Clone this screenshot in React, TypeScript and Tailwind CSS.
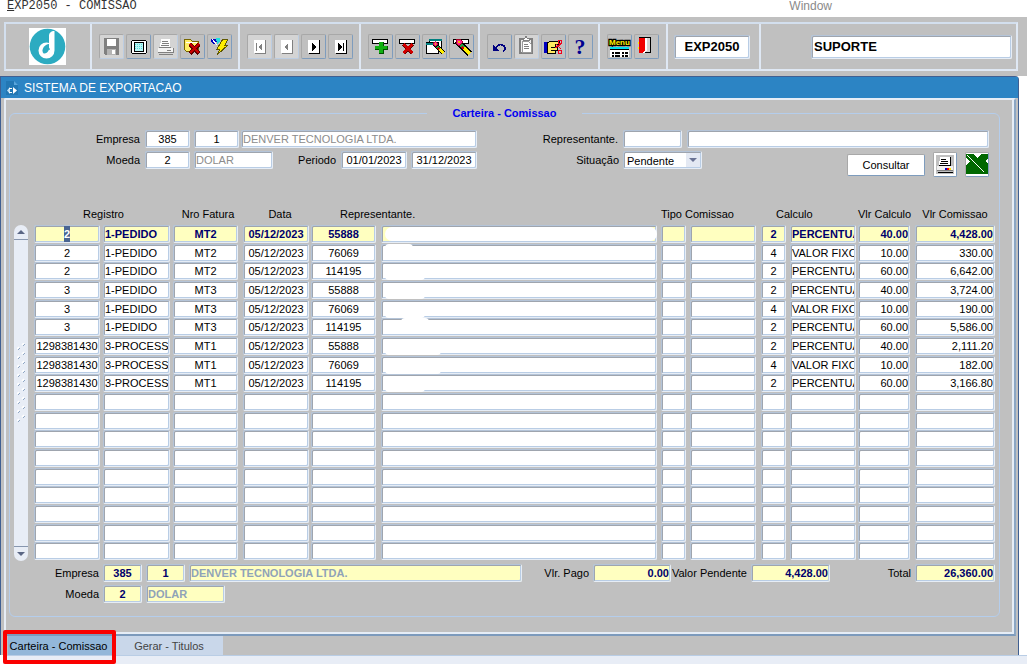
import { useEffect, useRef } from "react";
import type { InputHTMLAttributes, ReactNode } from "react";
import clsx from "clsx";

interface FieldProps extends InputHTMLAttributes<HTMLInputElement> {
  tone?: "white" | "yellow";
}

const bevel =
  "border border-t-[#b4c4d8] border-l-[#b4c4d8] border-r-[#e6edf6] border-b-[#e6edf6] rounded-xs shadow-[inset_1px_1px_0_#9fa5ae,inset_-1px_-1px_0_#b9cde5]";

const raised =
  "border border-t-[#a8a8a8] border-l-[#a8a8a8] border-r-[#7e9cbd] border-b-[#7e9cbd] rounded-xs";

function Field({ tone = "white", className, ...props }: FieldProps) {
  return (
    <input
      readOnly
      className={clsx(
        "block h-[18px] min-w-0 px-px outline-none",
        bevel,
        tone === "yellow" ? "bg-[#ffffc0] font-bold" : "bg-white",
        className
      )}
      {...props}
    />
  );
}

interface ToolButtonProps {
  label: string;
  disabled?: boolean;
  children: ReactNode;
}

function ToolButton({ label, disabled, children }: ToolButtonProps) {
  return (
    <button
      aria-label={label}
      disabled={disabled}
      className={clsx(
        "h-[25px] w-[25px] flex-none border rounded-xs border-t-[#a8a8a8] border-l-[#a8a8a8]",
        disabled
          ? "border-r-[#bccde2] border-b-[#bccde2] bg-[#d4d4d4]"
          : "border-r-[#7e9cbd] border-b-[#7e9cbd] bg-[#c0c0c0]"
      )}
    >
      <svg viewBox="0 0 23 23" className="block h-[23px] w-[23px]" shapeRendering="crispEdges">
        {children}
      </svg>
    </button>
  );
}

function NavGlyph({ color, children }: { color: string; children: ReactNode }) {
  return (
    <>
      <path d="M7 5h11v14H7z" fill={color} />
      <path d="M6 5h11v13H6z" fill="#fff" />
      <g fill={color}>{children}</g>
    </>
  );
}

function RecordBar() {
  return (
    <>
      <path d="M3 4h16v5H3z" fill="#000" />
      <path d="M4 5h14v3H4z" fill="#fff" />
    </>
  );
}

function RedCross() {
  return (
    <>
      <path d="M7.500 9.500l9 9M16.500 9.500l-9 9" stroke="#600000" strokeWidth="4" />
      <path d="M7.500 9l9 9M16.500 9l-9 9" stroke="#d00000" strokeWidth="2.500" />
    </>
  );
}

function Torch() {
  return (
    <>
      <path d="M7 6l13 13" stroke="#000" strokeWidth="6" />
      <path d="M13 12l7 7" stroke="#ffee00" strokeWidth="4" />
      <path d="M11 10l3 3" stroke="#20a040" strokeWidth="4" />
      <path d="M12 12l2 2" stroke="#d00000" strokeWidth="2" />
      <path d="M6 5l2-1h2l2 2v2l-2 2H8L6 8z" fill="#ff2090" stroke="#a00020" />
      <path d="M8 6h2v2H8z" fill="#ffb000" />
    </>
  );
}

function Toolbar() {
  const group = "flex flex-none items-center gap-0.5 border-r-2 border-[#dfe8f4] pl-[7px]";
  return (
    <div className="bg-[#c0c0c0] pt-[5px] pr-[9px] pb-[5px] pl-1">
      <div className="flex h-[49px] border-2 border-t-[#d3dfee] border-r-[#dfe8f4] border-b-[#dfe8f4] border-l-[#d3dfee]">
        <div className="flex w-[86px] flex-none items-center justify-center border-r-2 border-[#dfe8f4] pr-0.5">
          <svg viewBox="0 0 37 37" className="h-[37px] w-[37px] bg-white" role="img" aria-label="Denver">
            <circle cx="18.500" cy="18.500" r="17.800" fill="#2cabc1" />
            <path d="M20 8c0-3 2-5 5.500-5v19.500a8 8 0 1 1-8-8c1.200 0 2 .2 2.500.5z" fill="#fff" />
            <circle cx="17.300" cy="22.500" r="3.800" fill="#2cabc1" />
            <path d="M14 20.500c2-3.500 4-4.500 6-4.500v4z" fill="#2cabc1" />
            <path d="M15 25.500c2.500 0 4-1.500 5-4l2 1c-1 3-3 4.500-6 4.500z" fill="#fff" />
          </svg>
        </div>

        <div className={clsx(group, "w-[148px]")}>
          <ToolButton label="Salvar" disabled>
            <path d="M4 3h15v17H5l-1-1z" fill="#808080" />
            <path d="M7 4h9v7H7z" fill="#fff" />
            <path d="M7 14h9v6H7z" fill="#b4b4b4" />
            <path d="M12 15h3v4h-3z" fill="#fff" />
          </ToolButton>
          <ToolButton label="Tela">
            <path d="M5 5h14v1h1v12h-1v1H5v-1H4V6h1z" fill="#000" />
            <path d="M5 6h14v12H5z" fill="#fff" />
            <path d="M7 7h10v10H7z" fill="#000" />
            <path d="M8 8h8v8H8z" fill="#b8f6f6" />
            <path d="M8 9.500h8M8 11.500h8M8 13.500h8" stroke="#58d8d8" strokeDasharray="1 1" />
          </ToolButton>
          <ToolButton label="Imprimir" disabled>
            <path d="M7 4h9v8H6z" fill="#fff" />
            <path d="M8 6.500h6M8 8.500h7M7 10.500h8M5 12.500h12" stroke="#808080" />
            <path d="M4 13h15v4H4z" fill="#f4f4f4" />
            <path d="M4 17.500h15M5 19.500h14M13 15.500h4M19.500 13v5" stroke="#808080" />
          </ToolButton>
          <ToolButton label="Limpar">
            <path d="M3 5l2-1h4l2 2h6v10H5l-2-2z" fill="#ffee66" stroke="#776600" />
            <path d="M5 7.500h11" stroke="#fff" />
            <path d="M9 9.500l9 9M18 9.500l-9 9" stroke="#600000" strokeWidth="4" />
            <path d="M9 9l9 9M18 9l-9 9" stroke="#c80000" strokeWidth="2" />
          </ToolButton>
          <ToolButton label="Executar">
            <path d="M3 4h6v2L6 10 3 7z" fill="#0000c0" />
            <path d="M8 3h4v3l-3 3z" fill="#20e0e0" />
            <path d="M4 4l5 6" stroke="#fff" />
            <path d="M15 4h5l-3 6h3L9 20l3-6H9z" fill="#ffee00" stroke="#605800" />
          </ToolButton>
        </div>

        <div className={clsx(group, "w-[121px]")}>
          <ToolButton label="Primeiro" disabled>
            <NavGlyph color="#808080">
              <path d="M8 8h1v8H8zM14 8v8l-4-4z" />
            </NavGlyph>
          </ToolButton>
          <ToolButton label="Anterior" disabled>
            <NavGlyph color="#808080">
              <path d="M13 8v8l-4-4z" />
            </NavGlyph>
          </ToolButton>
          <ToolButton label="Proximo">
            <NavGlyph color="#000">
              <path d="M10 8v8l4-4z" />
            </NavGlyph>
          </ToolButton>
          <ToolButton label="Ultimo">
            <NavGlyph color="#000">
              <path d="M9 8v8l4-4zM14 8h1v8h-1z" />
            </NavGlyph>
          </ToolButton>
        </div>

        <div className={clsx(group, "w-[119px]")}>
          <ToolButton label="Inserir">
            <RecordBar />
            <path d="M10 7h5v4h4v4h-4v4h-5v-4H6v-4h4z" fill="#005000" />
            <path d="M10 7h4v4h4v3h-4v4h-4v-4H6v-3h4z" fill="#10b010" />
          </ToolButton>
          <ToolButton label="Excluir">
            <RecordBar />
            <RedCross />
          </ToolButton>
          <ToolButton label="Consulta">
            <path d="M6 4h13v13H6z" fill="#000" />
            <path d="M7 5h11v11H7z" fill="#fff" />
            <path d="M3 7h13v12H3z" fill="#000" />
            <path d="M4 8h11v10H4z" fill="#fff" />
            <path d="M3 8h12v2H3zM6 4h13v2H6z" fill="#008080" />
            <g transform="translate(6 4) scale(.72)">
              <Torch />
            </g>
          </ToolButton>
          <ToolButton label="Filtrar">
            <RecordBar />
            <Torch />
          </ToolButton>
        </div>

        <div className={clsx(group, "w-[120px]")}>
          <ToolButton label="Desfazer">
            <path d="M7 14c2-5 9-6 10-1 0 2-1 3-2 3" fill="none" stroke="#000080" strokeWidth="1.500" />
            <path d="M5 10v6h6z" fill="#000080" />
          </ToolButton>
          <ToolButton label="Colar" disabled>
            <path d="M5 4h12v14H5z" fill="#eee" stroke="#808080" strokeWidth="1.500" />
            <path d="M7 6h6l3 3v8H7z" fill="#fff" stroke="#999" />
            <path d="M8 3h2l1-2 1 2h2v2H8z" fill="#fff" stroke="#808080" />
            <path d="M9 9.500h4M9 11.500h5M9 13.500h5" stroke="#808080" />
          </ToolButton>
          <ToolButton label="Lista">
            <path d="M2 7h3v11H2z" fill="#0000c0" />
            <path d="M5 8l4-2h8v3h-4v3h2v3h-2v3H5z" fill="#ffe860" stroke="#000" />
            <path d="M9 12.500h5M9 15.500h4" stroke="#000" />
            <path d="M16 5h3v3h-3zM16 15h3v3h-3zM13 13l6-4M14 9l5 5" fill="none" stroke="#f00020" />
          </ToolButton>
          <ToolButton label="Ajuda">
            <text
              x="11"
              y="19"
              textAnchor="middle"
              fill="#000090"
              className="font-['Liberation_Serif',serif] text-[22px] font-bold"
            >
              ?
            </text>
          </ToolButton>
        </div>

        <div className={clsx(group, "w-[68px]")}>
          <ToolButton label="Menu">
            <text
              x="1"
              y="10"
              fill="#fff200"
              stroke="#000"
              strokeWidth="2.500"
              paintOrder="stroke"
              className="font-['Liberation_Sans',Arial,sans-serif] text-[8px] font-bold"
            >
              Menu
            </text>
            <path d="M2 12h19v10H2z" fill="#fff" />
            <path d="M2 12h19v2H2z" fill="#00e0f0" />
            <path d="M2 14.500h19" stroke="#000" />
            <path d="M4 17.500h16M4 20.500h16" stroke="#000" strokeWidth="2" strokeDasharray="2 1 5 2" />
          </ToolButton>
          <ToolButton label="Sair">
            <path d="M4 2h12v16H4z" fill="#000" />
            <path d="M5 3h10v14H5z" fill="#d4d4d4" />
            <path d="M9 3h3v12l-3 3H7z" fill="#fff" />
            <path d="M4 3h6v12l-3 3H4z" fill="#f00000" />
            <path d="M3 7h1v2H3zM3 12h1v2H3z" fill="#ffee00" />
          </ToolButton>
        </div>

        <div className="flex w-[93px] flex-none items-center border-r-2 border-[#dfe8f4] pl-[6px]">
          <input
            readOnly
            aria-label="Programa"
            defaultValue="EXP2050"
            className={clsx("h-6 w-[76px] bg-white text-center text-[13px] font-bold outline-none", bevel)}
          />
        </div>
        <div className="flex flex-1 items-center pr-1 pl-[50px]">
          <input
            readOnly
            aria-label="Usuario"
            defaultValue="SUPORTE"
            className={clsx("h-6 w-full bg-white pl-0.5 text-[13px] font-bold outline-none", bevel)}
          />
        </div>
      </div>
    </div>
  );
}

const rows = [
  ["2", "1-PEDIDO", "MT2", "05/12/2023", "55888", "", "", "", "2", "PERCENTUAL", "40.00", "4,428.00"],
  ["2", "1-PEDIDO", "MT2", "05/12/2023", "76069", "", "", "", "4", "VALOR FIXO", "10.00", "330.00"],
  ["2", "1-PEDIDO", "MT2", "05/12/2023", "114195", "", "", "", "2", "PERCENTUAL", "60.00", "6,642.00"],
  ["3", "1-PEDIDO", "MT3", "05/12/2023", "55888", "", "", "", "2", "PERCENTUAL", "40.00", "3,724.00"],
  ["3", "1-PEDIDO", "MT3", "05/12/2023", "76069", "", "", "", "4", "VALOR FIXO", "10.00", "190.00"],
  ["3", "1-PEDIDO", "MT3", "05/12/2023", "114195", "", "", "", "2", "PERCENTUAL", "60.00", "5,586.00"],
  ["1298381430", "3-PROCESSO", "MT1", "05/12/2023", "55888", "", "", "", "2", "PERCENTUAL", "40.00", "2,111.20"],
  ["1298381430", "3-PROCESSO", "MT1", "05/12/2023", "76069", "", "", "", "4", "VALOR FIXO", "10.00", "182.00"],
  ["1298381430", "3-PROCESSO", "MT1", "05/12/2023", "114195", "", "", "", "2", "PERCENTUAL", "60.00", "3,166.80"],
];

const TOTAL_ROWS = 18;

const columns = [
  { name: "Registro", col: "w-[69px]", cell: "pr-[3px]", align: "text-center" },
  { name: "Tipo Registro", col: "w-[70px]", cell: "pr-[3px]", align: "text-left" },
  { name: "Nro Fatura", col: "w-[70px]", cell: "pr-[5px]", align: "text-center" },
  { name: "Data", col: "w-[68px]", cell: "pr-0.5", align: "text-center" },
  { name: "Representante", col: "w-[70px]", cell: "pr-[5px]", align: "text-center" },
  { name: "Nome", col: "", cell: "pr-1", align: "text-left" },
  { name: "Tipo", col: "w-[29px]", cell: "pr-1", align: "text-center" },
  { name: "Tipo Comissao", col: "w-[71px]", cell: "pr-[5px]", align: "text-left" },
  { name: "Calculo", col: "w-[29px]", cell: "pr-1", align: "text-center" },
  { name: "Descricao Calculo", col: "w-[68px]", cell: "pr-0.5", align: "text-left" },
  { name: "Vlr Calculo", col: "w-[57px]", cell: "pr-[5px]", align: "text-right" },
  { name: "Vlr Comissao", col: "w-[80px]", cell: "", align: "text-right" },
];

// white-out over the names, one entry per filled row
const masks = [
  "inset-y-0.5 left-1 right-0 rounded-lg",
  "top-0 left-1 h-2 w-7 rounded-full",
  "bottom-0 left-1 h-2 w-10 rounded-full",
  "bottom-0 left-1 h-2 w-10 rounded-full",
  "bottom-0 left-1 h-2 w-10 rounded-full",
  "top-0 left-5 h-2 w-7 rounded-full",
  "bottom-0 left-1 h-2 w-14 rounded-full",
  "bottom-0 left-1 h-2 w-14 rounded-full",
  "bottom-0 left-1 h-2 w-10 rounded-full",
];

function ScrollBar() {
  return (
    <div className="flex h-[336px] w-[14px] flex-none flex-col items-center justify-between rounded-full bg-[#e8edf6]">
      <div className="flex h-[15px] w-full items-center justify-center border-b border-[#8796ae]">
        <svg viewBox="0 0 8 4" className="h-1 w-2">
          <path d="M4 0l4 4H0z" fill="#5a6684" />
        </svg>
      </div>
      <svg viewBox="0 0 8 84" className="mb-4 h-[84px] w-2" aria-hidden="true">
        {Array.from({ length: 9 }, (_, i) => (
          <g key={i}>
            <path d={`M0 ${i * 9 + 6}l2-2M5 ${i * 9 + 2}l2-2`} stroke="#fff" strokeWidth="1.5" />
            <path d={`M1 ${i * 9 + 7}l2-2M6 ${i * 9 + 3}l2-2`} stroke="#8fa6c4" />
          </g>
        ))}
      </svg>
      <div className="flex h-[15px] w-full items-center justify-center border-t border-[#8796ae]">
        <svg viewBox="0 0 8 4" className="h-1 w-2">
          <path d="M0 0h8L4 4z" fill="#5a6684" />
        </svg>
      </div>
    </div>
  );
}

function CommissionTable() {
  const body = useRef<HTMLTableSectionElement>(null);

  useEffect(() => {
    const input = body.current?.querySelector("input");
    input?.focus();
    input?.select();
  }, []);

  return (
    <table className="w-full flex-1 table-fixed border-collapse">
      <colgroup>
        {columns.map((c) => (
          <col key={c.name} className={c.col} />
        ))}
      </colgroup>
      <thead>
        <tr className="h-5 align-top leading-[18px] whitespace-nowrap [&>th]:p-0 [&>th]:font-normal">
          <th colSpan={2}>Registro</th>
          <th>Nro Fatura</th>
          <th>
            <span className="pl-1.5">Data</span>
          </th>
          <th colSpan={2} className="text-left">
            <span className="pl-[29px]">Representante.</span>
          </th>
          <th colSpan={2} className="text-left">Tipo Comissao</th>
          <th colSpan={2} className="text-left">
            <span className="pl-[15px]">Calculo</span>
          </th>
          <th className="text-left">Vlr Calculo</th>
          <th>Vlr Comissao</th>
        </tr>
      </thead>
      <tbody ref={body}>
        {Array.from({ length: TOTAL_ROWS }, (_, r) => (
          <tr key={r} className={clsx("align-top", r % 3 === 1 ? "h-[18px]" : "h-[19px]")}>
            {columns.map((c, i) => (
              <td key={c.name} className={clsx("p-0", c.cell)}>
                <div className="relative">
                  <Field
                    aria-label={`${c.name} ${r + 1}`}
                    defaultValue={rows[r]?.[i] ?? ""}
                    tone={r === 0 ? "yellow" : "white"}
                    className={clsx(
                      "w-full selection:bg-[#4a6592] selection:text-white",
                      c.align,
                      r === 0 && "text-[#00006c]"
                    )}
                  />
                  {i === 5 && masks[r] && <div className={clsx("absolute bg-white", masks[r])} />}
                </div>
              </td>
            ))}
          </tr>
        ))}
      </tbody>
    </table>
  );
}

function Filters() {
  return (
    <div className="flex pr-0.5">
      <div className="flex w-[463px] flex-none flex-col gap-[3px]">
        <div className="flex items-center">
          <label htmlFor="empresa" className="mr-[5px] w-[126px] text-right">Empresa</label>
          <Field id="empresa" defaultValue="385" className="w-[45px] text-center" />
          <Field aria-label="Filial" defaultValue="1" className="ml-1 w-[45px] text-center" />
          <Field
            aria-label="Nome da empresa"
            defaultValue="DENVER TECNOLOGIA LTDA."
            className="ml-0.5 flex-1 text-[#8c8c8c]"
          />
        </div>
        <div className="flex items-center">
          <label htmlFor="moeda" className="mr-[5px] w-[126px] text-right">Moeda</label>
          <Field id="moeda" defaultValue="2" className="w-[45px] text-center" />
          <Field aria-label="Nome da moeda" defaultValue="DOLAR" className="ml-1 w-[79px] text-[#8c8c8c]" />
          <label htmlFor="periodo" className="mr-[5px] ml-auto">Periodo</label>
          <Field id="periodo" defaultValue="01/01/2023" className="w-[66px] text-center" />
          <Field aria-label="Periodo final" defaultValue="31/12/2023" className="ml-1 w-[66px] text-center" />
        </div>
      </div>

      <div className="flex flex-1 flex-col gap-[3px]">
        <div className="flex items-center">
          <label htmlFor="representante" className="mr-[5px] w-[141px] text-right">Representante.</label>
          <Field id="representante" className="w-[59px]" />
          <Field aria-label="Nome do representante" className="mr-1 ml-[5px] flex-1" />
        </div>
        <div className="flex items-start pr-1">
          <label htmlFor="situacao" className="mr-1 w-[142px] text-right leading-[18px]">Situação</label>
          <div className="relative">
            <select
              id="situacao"
              defaultValue="Pendente"
              className={clsx("block h-[18px] w-[79px] appearance-none bg-white pl-[3px] outline-none", bevel)}
            >
              <option>Pendente</option>
              <option>Pago</option>
            </select>
            <span className="pointer-events-none absolute inset-y-0.5 right-0.5 flex w-[14px] items-center justify-center bg-[#e4e9f3]">
              <svg viewBox="0 0 8 4" className="h-1 w-2">
                <path d="M0 0h8L4 4z" fill="#6a7394" />
              </svg>
            </span>
          </div>
          <div className="ml-auto flex h-[27px] items-center gap-2">
            <button className={clsx("h-[22px] w-[78px] bg-white", raised)}>Consultar</button>
            <button aria-label="Imprimir" className={clsx("h-[25px] w-6 bg-[#c0c0c0]", raised)}>
              <svg viewBox="0 0 22 23" className="block h-[23px] w-[22px]" shapeRendering="crispEdges">
                <path d="M0 0h22v23H0z" fill="#fff" />
                <path d="M2 2h18v19H2z" fill="#c0c0c0" />
                <path d="M6 4h10v8H5z" fill="#fff" />
                <path d="M16.500 4v8M7 6.500h5M7 8.500h7M6 10.500h8M5 12.500h12" stroke="#000" />
                <path d="M3 13h16v5H3z" fill="#f0f0f0" />
                <path d="M3 17h16v1H3z" fill="#808080" />
                <path d="M11 15h2v2h-2z" fill="#0000d0" />
                <path d="M13 15h2v2h-2z" fill="#f00000" />
                <path d="M15 15h2v2h-2z" fill="#ffe000" />
                <path d="M4 19.500h15" stroke="#000" />
              </svg>
            </button>
            <button aria-label="Exportar Excel" className={clsx("h-[25px] w-6 bg-white", raised)}>
              <svg viewBox="0 0 22 23" className="block h-[23px] w-[22px]" shapeRendering="crispEdges">
                <path d="M0 1h7l4 4 4-4h7v4l-3 3 3 3v10H0V12l4-3-4-4z" fill="#006800" />
                <path d="M1 2l17 17" stroke="#fff" />
              </svg>
            </button>
          </div>
        </div>
      </div>
    </div>
  );
}

function Totals() {
  const amount = "text-right text-[#00006c]";
  return (
    <div className="mt-[3px] flex flex-col gap-[3px]">
      <div className="flex items-center whitespace-nowrap">
        <label htmlFor="t-empresa" className="mr-1 w-[85px] text-right">Empresa</label>
        <Field id="t-empresa" tone="yellow" defaultValue="385" className="w-[39px] text-center text-[#00006c]" />
        <Field
          aria-label="Filial do total"
          tone="yellow"
          defaultValue="1"
          className="ml-1 w-[39px] text-center text-[#00006c]"
        />
        <Field
          aria-label="Empresa do total"
          tone="yellow"
          defaultValue="DENVER TECNOLOGIA LTDA."
          className="ml-1 flex-1 text-[#8fa3b8]"
        />
        <label htmlFor="pago" className="mr-1 w-[67px] text-right">Vlr. Pago</label>
        <Field id="pago" tone="yellow" defaultValue="0.00" className={clsx("w-[78px]", amount)} />
        <label htmlFor="pendente" className="mr-1 w-[76px] text-right">Valor Pendente</label>
        <Field id="pendente" tone="yellow" defaultValue="4,428.00" className={clsx("w-[79px]", amount)} />
        <label htmlFor="total" className="mr-1 w-[81px] text-right">Total</label>
        <Field id="total" tone="yellow" defaultValue="26,360.00" className={clsx("w-20", amount)} />
      </div>
      <div className="flex items-center">
        <label htmlFor="t-moeda" className="mr-1 w-[85px] text-right">Moeda</label>
        <Field id="t-moeda" tone="yellow" defaultValue="2" className="w-[39px] text-center text-[#00006c]" />
        <Field
          aria-label="Moeda do total"
          tone="yellow"
          defaultValue="DOLAR"
          className="ml-1 w-[79px] text-[#8fa3b8]"
        />
      </div>
    </div>
  );
}

export default function App() {
  return (
    <div className="min-h-screen bg-white font-['Liberation_Sans',Arial,sans-serif] text-[11px] leading-[18px] text-black">
      <header className="flex h-[17px] items-start justify-between pr-[195px] pl-[7px] text-[12px] leading-3">
        <span className="font-['Liberation_Mono',monospace] text-[#333]">
          <u>E</u>XP2050 - COMISSAO
        </span>
        <span className="text-[#8a8a8a]">Window</span>
      </header>

      <Toolbar />

      <main className="mr-2 rounded-tr-sm border-t border-r border-l border-[#3f5f92] bg-[#c0c0c0]">
        <div className="flex h-[21px] items-center gap-1.5 bg-[#2c84c4] pl-[5px] text-[12px] text-white">
          <svg viewBox="0 0 12 16" className="h-4 w-3">
            <path d="M0 1h8l4 4v10H0z" fill="#2277b4" />
            <path d="M8 1l4 4H8z" fill="#5aa6dc" />
            <path d="M7 7l4 3.500L7 14z" fill="#fff" />
            <path d="M1 10.500L4 7v7z" fill="#bfe0f6" />
            <path d="M3 8.500h3M3 12.500h3" stroke="#fff" />
          </svg>
          <h1>SISTEMA DE EXPORTACAO</h1>
        </div>

        <div className="mr-0.5 ml-[3px] rounded-t-xs border-2 border-t-[#e6edf6] border-r-[#8ba6c4] border-b-[#7c9abc] border-l-[#e6edf6] pt-[5px] pr-[14px] pb-[17px] pl-[3px] shadow-[inset_-2px_-2px_0_#e6edf6]">
          <fieldset className="rounded-md border border-[#b4cdec] pr-1 pb-[13px] pl-1">
            <legend className="mx-auto px-[26px] leading-4 font-bold text-[#0000f0]">Carteira - Comissao</legend>
            <div className="pt-[9px]">
              <Filters />
              <div className="mt-[27px] flex items-end gap-1.5">
                <ScrollBar />
                <CommissionTable />
              </div>
              <Totals />
            </div>
          </fieldset>
        </div>

        <nav className="relative flex h-[19px] pl-[7px]">
          <button className="w-[107px] bg-[#93b7d9] pr-1.5 whitespace-nowrap">Carteira - Comissao</button>
          <button className="w-[108px] bg-[#c9d7ea] text-[#444]">Gerar - Titulos</button>
          <div className="pointer-events-none absolute -top-1.5 left-0.5 h-[34px] w-[113px] rounded-xs border-4 border-[#fa0000]" />
        </nav>
      </main>
      <footer className="ml-[3px] h-[10px] border-t border-[#b9cde5] bg-[#e8edf6]" />
    </div>
  );
}
